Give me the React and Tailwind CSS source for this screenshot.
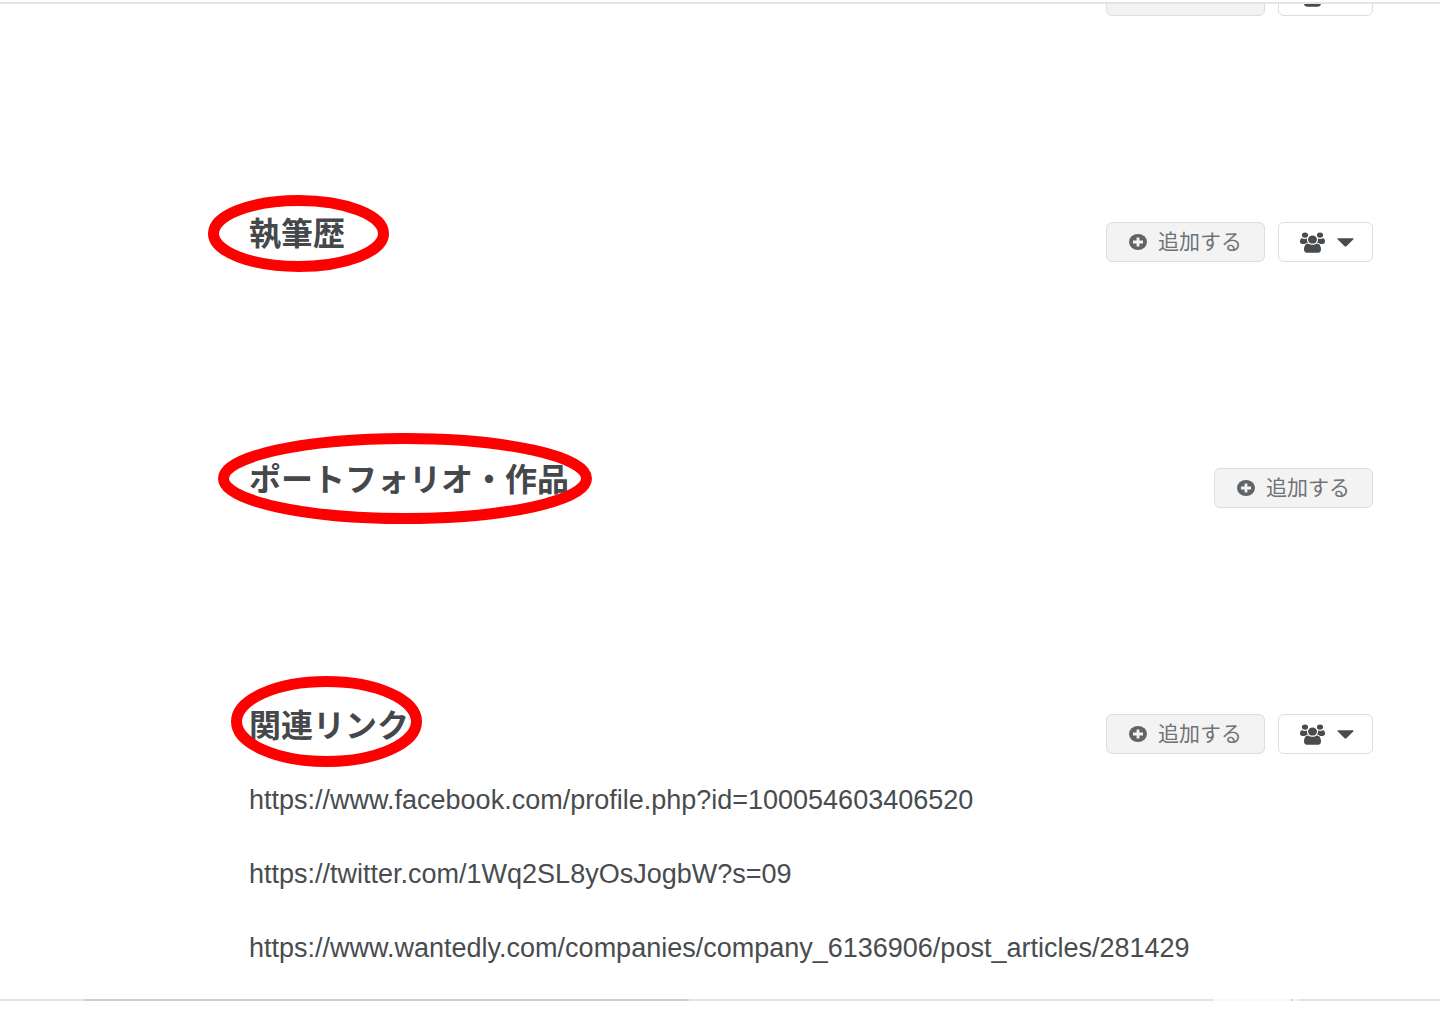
// Profile page: lists the editable sections with their add / visibility buttons

// Sections in display order, `ring` is the size of the red ring and `mark` its place round the heading
const sections = [
  { id: "previous", shared: true },
  {
    id: "writing",
    title: "執筆歴",
    shared: true,
    ring: { width: 181, height: 77 },
    mark: "-left-[41px] -top-[19px]",
  },
  {
    id: "portfolio",
    title: "ポートフォリオ・作品",
    shared: false,
    ring: { width: 374, height: 91 },
    mark: "-left-[31px] -top-[27px]",
  },
  {
    id: "links",
    title: "関連リンク",
    shared: true,
    ring: { width: 191, height: 91 },
    mark: "-left-[18px] -top-[30px]",
    links: [
      "https://www.facebook.com/profile.php?id=100054603406520",
      "https://twitter.com/1Wq2SL8yOsJogbW?s=09",
      "https://www.wantedly.com/companies/company_6136906/post_articles/281429",
    ],
  },
];

const PlusIcon = () => (
  <svg width="18" height="16" viewBox="0 0 18 16" aria-hidden="true">
    <ellipse cx="9" cy="8" rx="9" ry="8" fill="#5f6467" />
    <path d="M9 3.6v8.8M4 8h10" stroke="#f3f3f3" strokeWidth="2.8" />
  </svg>
);

const GroupIcon = () => (
  <svg width="25" height="21" viewBox="0 0 25 21" fill="#484c4f" aria-hidden="true">
    {/* people at the back */}
    <ellipse cx="5" cy="3.1" rx="3.1" ry="2.7" />
    <ellipse cx="20" cy="3.1" rx="3.1" ry="2.7" />
    <path d="M2 6.2C3.6 7.2 5.6 7.2 7 6.5C6.8 8.4 7.2 9.8 8.2 10.8C6.8 10.9 5.8 11.2 5 11.9H2.6C.9 11.9 0 11.1 0 9.7C0 7.8.6 6.2 2 6.2Z" />
    <path d="M23 6.2C21.4 7.2 19.4 7.2 18 6.5C18.2 8.4 17.8 9.8 16.8 10.8C18.2 10.9 19.2 11.2 20 11.9H22.4C24.1 11.9 25 11.1 25 9.7C25 7.8 24.4 6.2 23 6.2Z" />
    {/* person in front */}
    <ellipse cx="12.5" cy="7.6" rx="4.5" ry="4" />
    <path d="M8.2 11.4C10.4 13.2 14.6 13.2 16.8 11.4C19.6 11.4 21 14.2 21 17.4C21 19.5 19.6 20.8 17.4 20.8H7.6C5.4 20.8 4 19.5 4 17.4C4 14.2 5.4 11.4 8.2 11.4Z" />
  </svg>
);

const CaretIcon = () => (
  <svg width="17" height="9" viewBox="0 0 17 9" fill="#484c4f" aria-hidden="true">
    <path d="M1 .3H16Q17 .6 16.2 1.5L9.4 8.2Q8.5 8.9 7.6 8.2L.8 1.5Q0 .6 1 .3Z" />
  </svg>
);

// Red ring drawn over a heading
const Ring = ({ width, height, className }) => (
  <svg
    width={width}
    height={height}
    className={`pointer-events-none absolute max-w-none ${className}`}
    aria-hidden="true"
  >
    <ellipse
      cx={width / 2}
      cy={height / 2}
      rx={width / 2 - 5.5}
      ry={height / 2 - 5.5}
      fill="none"
      stroke="#ff0000"
      strokeWidth="11"
    />
  </svg>
);

const AddButton = ({ showLabel }) => (
  <button
    type="button"
    aria-label="追加する"
    className="flex h-10 min-w-[159px] items-center gap-[11px] rounded-md border border-[#dddddd] bg-[#f3f3f3] px-[22px] text-[21px] leading-8 text-[#707376]"
  >
    <PlusIcon />
    {showLabel && <span>追加する</span>}
  </button>
);

const ShareButton = () => (
  <button
    type="button"
    aria-label="公開範囲"
    className="flex h-10 items-center gap-3 rounded-md border border-[#dddddd] bg-white pl-[21px] pr-[18px]"
  >
    <GroupIcon />
    <CaretIcon />
  </button>
);

const Section = ({ title, shared, ring, mark, links }) => {
  return (
    <section className="min-h-[246px]">
      <div className="flex items-start justify-between">
        <div className="relative">
          {title && (
            <>
              <h2 className="text-[32px] font-bold leading-10 text-[#44484b]">{title}</h2>
              <Ring width={ring.width} height={ring.height} className={mark} />
            </>
          )}
        </div>
        <div className="flex gap-[13px] pt-2">
          <AddButton showLabel={Boolean(title)} />
          {shared && <ShareButton />}
        </div>
      </div>

      {links && (
        <ul className="flex flex-col gap-[42px] pt-[30px] text-[27px] leading-8 text-[#484c4f]">
          {links.map((link) => (
            <li key={link}>
              <a href={link}>{link}</a>
            </li>
          ))}
        </ul>
      )}
    </section>
  );
};

const App = () => {
  return (
    <div className="flex h-screen flex-col bg-white pb-[18px] pt-[2px] font-['Liberation_Sans','Noto_Sans_CJK_JP',sans-serif]">
      {/* Scrolled content */}
      <main className="min-h-0 flex-1 overflow-hidden border-t-2 border-[#e4e4e4] pl-[249px] pr-[67px]">
        <div className="-mt-9">
          {sections.map((section) => (
            <Section key={section.id} {...section} />
          ))}
        </div>
      </main>

      {/* Bottom edge */}
      <div className="flex h-[2px] bg-[#e4e4e4]">
        <div className="w-[84px]" />
        <div className="w-[42%] bg-[#cfcfcf]" />
        <div className="flex-1" />
        <div className="w-[77px] bg-[#f8f8f8]" />
        <div className="w-[2px] bg-[#cfcfcf]" />
        <div className="w-[5px] bg-[#f4f4f4]" />
        <div className="w-[142px]" />
      </div>
    </div>
  );
};

export default App;
